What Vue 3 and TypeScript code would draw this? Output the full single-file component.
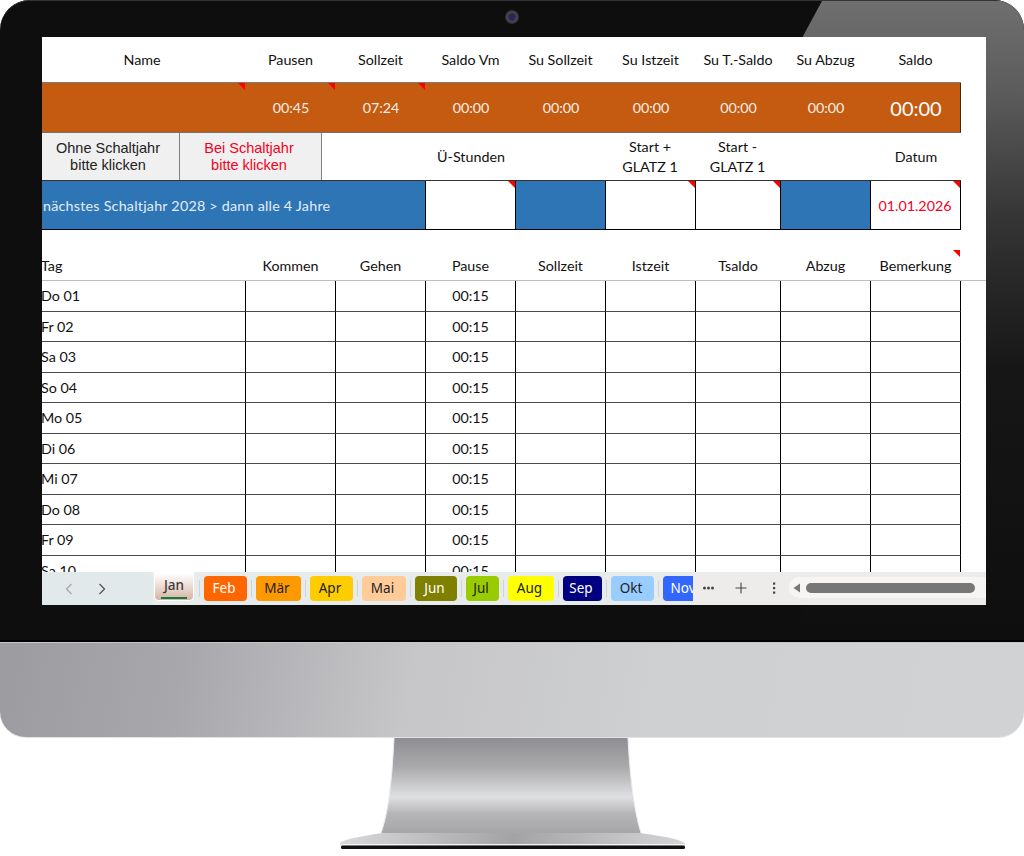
<template>
  <div class="monitor">
    <div class="bezel">
      <div class="glare"></div>
      <div class="camera"></div>

      <div class="screen">
        <div class="sheet">
          <!-- Kopfzeile -->
          <div class="row row-head">
            <div v-for="(h, i) in topLabels" :key="h" :class="['cell', { 'name-cell': i === 0 }]">{{ h }}</div>
          </div>

          <div class="row row-orange">
            <div
              v-for="(v, i) in topValues"
              :key="i"
              :class="['cell', { note: i < 3, big: i === 8 }]"
            >
              {{ v }}
            </div>
          </div>

          <div class="row row-info">
            <div class="cell span3">
              <button class="leap-btn first">Ohne Schaltjahr<br />bitte klicken</button>
              <button class="leap-btn second">Bei Schaltjahr<br />bitte klicken</button>
            </div>
            <div class="cell">Ü-Stunden</div>
            <div class="cell"></div>
            <div class="cell two">Start +<br />GLATZ 1</div>
            <div class="cell two">Start -<br />GLATZ 1</div>
            <div class="cell"></div>
            <div class="cell">Datum</div>
          </div>

          <div class="row row-blue">
            <div class="cell span3 blue left">nächstes Schaltjahr 2028 &gt; dann alle 4 Jahre</div>
            <div class="cell note"></div>
            <div class="cell blue"></div>
            <div class="cell note"></div>
            <div class="cell note"></div>
            <div class="cell blue"></div>
            <div class="cell note date">01.01.2026</div>
          </div>

          <!-- Tabelle -->
          <div class="row row-table-head">
            <div
              v-for="(h, i) in tableLabels"
              :key="h"
              :class="['cell', { 'left tag': i === 0, 'note high': i === 8 }]"
            >
              {{ h }}
            </div>
          </div>

          <div v-for="d in days" :key="d" class="row row-day">
            <div class="cell left tag">{{ d }}</div>
            <div v-for="n in 8" :key="n" class="cell">{{ n === 3 ? '00:15' : '' }}</div>
          </div>
        </div>

        <!-- Blattregister -->
        <div class="tabbar">
          <div class="nav">
            <svg width="12" height="14" viewBox="0 0 12 14" class="chev">
              <path d="M8.5 2 L3.5 7 L8.5 12" fill="none" stroke="#a3a8a9" stroke-width="1.3" />
            </svg>
            <svg width="12" height="14" viewBox="0 0 12 14" class="chev">
              <path d="M3.5 2 L8.5 7 L3.5 12" fill="none" stroke="#555" stroke-width="1.3" />
            </svg>
          </div>
          <div class="tab-active"><span>Jan</span></div>
          <div class="tabs">
            <template v-for="t in tabs" :key="t.name">
              <i class="sep"></i>
              <div
                class="tab"
                :style="{ flexBasis: t.w + 'px', background: t.bg, color: t.fg }"
              >
                {{ t.name }}
              </div>
            </template>
          </div>
          <div class="tools">
            <svg width="16" height="16" viewBox="0 0 16 16" class="tool-more">
              <circle cx="3.5" cy="8" r="1.5" fill="#444" />
              <circle cx="7.5" cy="8" r="1.5" fill="#444" />
              <circle cx="11.5" cy="8" r="1.5" fill="#444" />
            </svg>
            <svg width="16" height="16" viewBox="0 0 16 16" class="tool-plus">
              <path d="M8 2.5 V13.5 M2.5 8 H13.5" stroke="#444" stroke-width="1.1" />
            </svg>
            <svg width="16" height="16" viewBox="0 0 16 16" class="tool-dots">
              <rect x="7" y="2.5" width="2.2" height="2.2" fill="#444" />
              <rect x="7" y="7" width="2.2" height="2.2" fill="#444" />
              <rect x="7" y="11.5" width="2.2" height="2.2" fill="#444" />
            </svg>
            <div class="scroll">
              <svg width="8" height="10" viewBox="0 0 8 10" class="scroll-arrow">
                <path d="M7 0.5 V9.5 L0.5 5 Z" fill="#777" />
              </svg>
              <div class="thumb"></div>
            </div>
          </div>
        </div>
      </div>
    </div>

    <div class="chin"></div>

    <!-- Standfuss -->
    <svg class="stand" width="1024" height="118" viewBox="0 0 1024 118">
      <defs>
        <linearGradient id="neck" x1="0" y1="0" x2="0" y2="1">
          <stop offset="0" stop-color="#8f8f93" />
          <stop offset="0.3" stop-color="#a9a9ac" />
          <stop offset="0.62" stop-color="#dfe0e2" />
          <stop offset="0.8" stop-color="#b5b5b8" />
          <stop offset="1" stop-color="#a6a6a9" />
        </linearGradient>
        <linearGradient id="foot" x1="0" y1="0" x2="1" y2="0">
          <stop offset="0" stop-color="#d9d9db" />
          <stop offset="0.5" stop-color="#a3a3a6" />
          <stop offset="1" stop-color="#d5d5d7" />
        </linearGradient>
      </defs>
      <path d="M340 105 Q342 101 382 95 L640 95 Q684 101 685 106 L684 110 L341 110 Z" fill="url(#foot)" />
      <path d="M394 0 L628 0 C630 40 634 72 641 95 L381 95 C389 72 392 40 394 0 Z" fill="url(#neck)" />
      <path d="M394 0 C392 40 389 72 381 95 M628 0 C630 40 634 72 641 95" fill="none" stroke="#eee" stroke-width="1" />
      <rect x="342" y="106" width="342" height="1.5" fill="#f4f4f4" />
      <rect x="341" y="107.5" width="344" height="3.5" rx="1.5" fill="#111" />
    </svg>
  </div>
</template>

<script setup lang="ts">
interface SheetTab {
  name: string
  w: number
  bg: string
  fg: string
}

const topLabels = ['Name', 'Pausen', 'Sollzeit', 'Saldo Vm', 'Su Sollzeit', 'Su Istzeit', 'Su T.-Saldo', 'Su Abzug', 'Saldo']
const topValues = ['', '00:45', '07:24', '00:00', '00:00', '00:00', '00:00', '00:00', '00:00']
const tableLabels = ['Tag', 'Kommen', 'Gehen', 'Pause', 'Sollzeit', 'Istzeit', 'Tsaldo', 'Abzug', 'Bemerkung']
const days = ['Do 01', 'Fr 02', 'Sa 03', 'So 04', 'Mo 05', 'Di 06', 'Mi 07', 'Do 08', 'Fr 09', 'Sa 10']

const tabs: SheetTab[] = [
  { name: 'Feb', w: 43, bg: '#ff6600', fg: '#fff' },
  { name: 'Mär', w: 45, bg: '#ff9900', fg: '#222' },
  { name: 'Apr', w: 43, bg: '#ffcc00', fg: '#222' },
  { name: 'Mai', w: 44, bg: '#ffcc99', fg: '#222' },
  { name: 'Jun', w: 42, bg: '#808000', fg: '#fff' },
  { name: 'Jul', w: 33, bg: '#99cc00', fg: '#222' },
  { name: 'Aug', w: 46, bg: '#ffff00', fg: '#222' },
  { name: 'Sep', w: 39, bg: '#000080', fg: '#fff' },
  { name: 'Okt', w: 43, bg: '#99ccff', fg: '#222' },
  { name: 'Nov', w: 43, bg: '#3366ff', fg: '#fff' },
]
</script>

<style>
html,
body {
  margin: 0;
  background: #fff;
}
</style>

<style scoped>
.monitor {
  width: 1024px;
  height: 856px;
  overflow: hidden;
  display: flex;
  flex-direction: column;
  font-family: Lato, "Liberation Sans", sans-serif;
}

.bezel {
  position: relative;
  height: 642px;
  flex: none;
  box-sizing: border-box;
  padding: 37px 38px 0 42px;
  background: #0e0e0e;
  border-radius: 30px 30px 0 0;
  overflow: hidden;
  border-bottom: 2px solid #000;
  box-shadow: inset 0 1px 0 #333;
}

.glare {
  position: absolute;
  top: 1px;
  right: 0;
  width: 222px;
  height: 640px;
  background: linear-gradient(180deg, #6f6f6f 0, #5c5c5c 90px, #343434 220px, #161616 370px, #0e0e0e 100%);
  clip-path: polygon(20px 0, 100% 0, 100% 100%, 0 100%, 0 37px);
}

.camera {
  position: absolute;
  top: 10px;
  left: 505px;
  width: 14px;
  height: 14px;
  border-radius: 50%;
  background: radial-gradient(circle, #2a1f8c 0, #26234f 25%, #48494d 50%, #242426 75%, #000 100%);
}

.screen {
  position: relative;
  width: 944px;
  height: 568px;
  background: #fff;
  display: flex;
  flex-direction: column;
  overflow: hidden;
}

.sheet {
  flex: 1;
  min-height: 0;
  overflow: hidden;
  color: #111;
  font-size: 14.3px;
}

.row {
  display: grid;
  grid-template-columns: 204px 90px 90px 90px 90px 90px 85px 90px 90px;
  box-sizing: border-box;
}

.cell {
  position: relative;
  display: flex;
  align-items: center;
  justify-content: center;
  box-sizing: border-box;
  text-align: center;
  min-width: 0;
  white-space: nowrap;
}

.cell.left {
  justify-content: flex-start;
  text-align: left;
}

.span3 {
  grid-column: span 3;
}

/* rotes Kommentar-Dreieck */
.note::after {
  content: "";
  position: absolute;
  top: 0;
  right: 0;
  border-top: 7px solid #f00;
  border-left: 7px solid transparent;
}

.row-head {
  height: 46px;
  width: 919px;
  border-bottom: 1px solid #7c7c7c;
  padding-bottom: 1px;
}

.row-head .cell {
  padding-right: 1px;
}

.row-head .name-cell {
  padding-right: 4px;
}

.row-orange {
  height: 50px;
  width: 919px;
  background: #c55a11;
  border-bottom: 1px solid #6f6f6f;
  border-right: 1px solid #3a2a1a;
  color: #f6efe9;
}

.row-orange .cell.big {
  font-size: 20px;
  color: #fff;
}

.row-orange .note::after {
  right: 1px;
}

.row-info {
  height: 48px;
  width: 919px;
  border-bottom: 1px solid #333;
}

.row-info .cell.two {
  line-height: 20px;
  padding-right: 2px;
}

.row-info .span3 {
  justify-content: flex-start;
  align-items: stretch;
}

.leap-btn {
  box-sizing: border-box;
  height: 47px;
  border: 0;
  border-right: 1px solid #808080;
  background: #f0f0f0;
  color: #222;
  font-family: "Liberation Sans", Arial, sans-serif;
  font-size: 14.5px;
  line-height: 17px;
}

.leap-btn.first {
  width: 138px;
  padding: 0 5px 0 0;
}

.leap-btn.second {
  width: 142px;
  padding: 0 3px 0 0;
  color: #f5001e;
}

.row-blue {
  height: 49px;
  width: 919px;
  border-bottom: 1px solid #000;
}

.row-blue .cell {
  border-right: 1px solid #000;
}

.blue {
  background: #2e75b6;
}

.row-blue .left {
  color: #e4edf5;
  padding-left: 1px;
  letter-spacing: 0.23px;
}

.date {
  color: #f5001e;
  padding-right: 1px;
}

.row-table-head {
  height: 51px;
  border-bottom: 1px solid #bdbdbd;
  width: 944px;
  grid-template-columns: 204px 90px 90px 90px 90px 90px 85px 90px 90px 25px;
}

.row-table-head .cell {
  align-items: flex-end;
  padding-bottom: 6px;
  padding-right: 1px;
}

.row-table-head .cell.high::after {
  top: 20px;
  right: 1px;
}

.row-day {
  height: 30.5px;
  width: 919px;
  color: #111;
}

.row-day .cell {
  border-right: 1px solid #000;
  border-bottom: 1px solid #4a4a4a;
}

.tag {
  margin-left: -1px;
}

.tabbar {
  flex: none;
  height: 33px;
  display: flex;
  background: #e8eced;
  font-family: "Noto Sans", "Open Sans", sans-serif;
  font-size: 13.5px;
  color: #222;
}

.nav {
  width: 111px;
  flex: none;
  display: flex;
  align-items: flex-start;
  gap: 21px;
  padding: 10px 0 0 21px;
  box-sizing: border-box;
  background: #e2e9ea;
  border-top-right-radius: 5px;
}

.chev {
  display: block;
}

.tab-active {
  flex: none;
  width: 40px;
  height: 29px;
  box-sizing: border-box;
  background: linear-gradient(180deg, #fff 5%, #f3e8e2 35%, #d6b3a2 100%);
  border: 1px solid #fff;
  border-top: 0;
  border-radius: 0 0 5px 5px;
  display: flex;
  justify-content: center;
  box-shadow: 0 -4px 0 #fff;
  margin-left: 1px;
  position: relative;
  color: #3c3c3c;
  font-weight: 500;
  line-height: 26px;
}

.tab-active span {
  display: block;
  height: 25px;
  padding: 0 1px;
  min-width: 24px;
  text-align: center;
  border-bottom: 2px solid #107c41;
}

.tabs {
  flex: none;
  width: 498px;
  margin-left: 1px;
  display: flex;
  align-items: flex-start;
  padding-top: 4px;
  box-sizing: border-box;
  overflow: hidden;
  background: #e7ebeb;
  border-top-left-radius: 5px;
}

.sep {
  flex: none;
  width: 1px;
  height: 17px;
  margin: 4px 4px 0;
  background: #cfd3d3;
}

.tab {
  flex: none;
  box-sizing: border-box;
  height: 25px;
  padding-right: 3px;
  line-height: 25px;
  text-align: center;
  border-radius: 4px;
}

.tools {
  flex: 1;
  display: flex;
  align-items: center;
  background: #edecea;
  padding-bottom: 2px;
  box-sizing: border-box;
}

.tool-more {
  margin-left: 8px;
}

.tool-plus {
  margin-left: 16px;
}

.tool-dots {
  margin-left: 17px;
}

.scroll {
  flex: 1;
  margin-left: 7px;
  height: 21px;
  display: flex;
  align-items: center;
  background: #f6f5f3;
  border-radius: 10px 0 0 10px;
}

.scroll-arrow {
  margin-left: 4px;
}

.thumb {
  width: 169px;
  height: 10px;
  margin-left: 5px;
  border-radius: 5px;
  background: #777;
}

.chin {
  flex: none;
  height: 96px;
  box-sizing: border-box;
  border-top: 1px solid #c6c6c9;
  border-bottom: 1px solid #e2e2e4;
  background: linear-gradient(100deg, #9c9ca0 0, #a8a8ac 18%, #c6c6c9 40%, #cfd0d2 65%, #d1d2d4 100%);
  border-radius: 0 0 26px 26px;
}

.stand {
  flex: none;
  display: block;
}
</style>
